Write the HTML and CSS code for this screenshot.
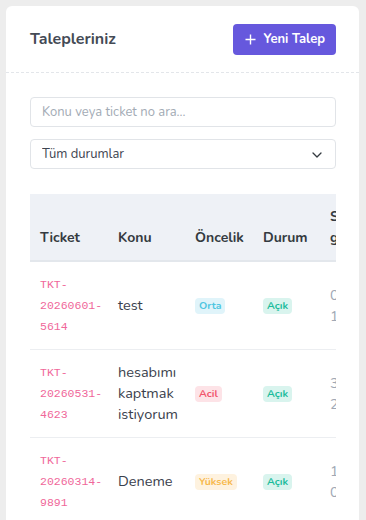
FILE: index.html
```html
<!DOCTYPE html>
<html lang="tr">
<head>
  <meta charset="UTF-8" />
  <title>Talepleriniz</title>
  <meta name="viewport" content="width=device-width, initial-scale=1.0">
  <link rel="stylesheet" href="styles.css">
</head>
<body>

<div class="card">
  <div class="card-header">
    <h4 class="card-title">Talepleriniz</h4>
    <button class="btn-primary">
      <svg width="11" height="11" viewBox="0 0 11 11"><path d="M5.5 0.5v10M0.5 5.5h10" stroke="#fff" stroke-width="1.4" fill="none"/></svg>
      Yeni Talep
    </button>
  </div>

  <div class="card-body">
    <input type="text" class="form-control" placeholder="Konu veya ticket no ara...">

    <div class="select-wrap">
      <select class="form-control form-select">
        <option>Tüm durumlar</option>
        <option>Açık</option>
        <option>Kapalı</option>
      </select>
      <svg class="select-arrow" width="10" height="6" viewBox="0 0 10 6"><path d="M1 1l4 4 4-4" stroke="#343a40" stroke-width="1.3" fill="none" stroke-linecap="round" stroke-linejoin="round"/></svg>
    </div>

    <div class="table-responsive">
      <table class="ticket-table">
        <thead>
          <tr>
            <th class="col-ticket">Ticket</th>
            <th class="col-subject">Konu</th>
            <th class="col-priority">Öncelik</th>
            <th class="col-status">Durum</th>
            <th class="col-date">Son<br>güncelleme</th>
          </tr>
        </thead>
        <tbody>
          <tr>
            <td><code>TKT-<br>20260601-<br>5614</code></td>
            <td>test</td>
            <td><span class="badge badge-info">Orta</span></td>
            <td><span class="badge badge-success">Açık</span></td>
            <td class="muted">01.06.2026<br>14:22</td>
          </tr>
          <tr>
            <td><code>TKT-<br>20260531-<br>4623</code></td>
            <td>hesabımı<br>kaptmak<br>istiyorum</td>
            <td><span class="badge badge-danger">Acil</span></td>
            <td><span class="badge badge-success">Açık</span></td>
            <td class="muted">31.05.2026<br>20:41</td>
          </tr>
          <tr>
            <td><code>TKT-<br>20260314-<br>9891</code></td>
            <td>Deneme</td>
            <td><span class="badge badge-warning">Yüksek</span></td>
            <td><span class="badge badge-success">Açık</span></td>
            <td class="muted">14.03.2026<br>09:05</td>
          </tr>
        </tbody>
      </table>
    </div>
  </div>
</div>

</body>
</html>
```

FILE: styles.css
```css
body {
  margin: 0;
  padding: 6px 7px 0 6px;
  background-color: #ededed;
  font-family: Nunito, Lato, "Open Sans", sans-serif;
  font-size: 14px;
  line-height: 1.5;
  color: #3a404c;
  height: 520px;
  overflow: hidden;
  box-sizing: border-box;
}
.card {
  background: #fff;
  border-radius: 6px;
  min-height: 600px;
}
.card-header {
  display: flex;
  justify-content: space-between;
  align-items: center;
  height: 66px;
  padding: 0 23px 0 24px;
  border-bottom: 1px dashed #e3e6ea;
}
.card-title {
  margin: 0;
  font-size: 16px;
  font-weight: 700;
  color: #444a55;
}
.btn-primary {
  display: flex;
  align-items: center;
  gap: 7px;
  height: 31px;
  padding: 0 11px 0 12px;
  background-color: #6658dd;
  color: #fff;
  border: none;
  border-radius: 4px;
  font-family: inherit;
  font-size: 13px;
  font-weight: 700;
}
.card-body {
  padding: 24px 23px 0 24px;
}
.form-control {
  display: block;
  width: 100%;
  box-sizing: border-box;
  height: 30px;
  padding: 0 11px;
  border: 1px solid #e1e4e8;
  border-radius: 4px;
  font-family: inherit;
  font-size: 13px;
  color: #3e4450;
  background: #fff;
}
.form-control::placeholder {
  color: #a3abb5;
}
.select-wrap {
  position: relative;
  margin-top: 12px;
}
.form-select {
  appearance: none;
  -webkit-appearance: none;
}
.select-arrow {
  position: absolute;
  right: 14px;
  top: 13px;
  pointer-events: none;
}
.table-responsive {
  margin-top: 25px;
  overflow: hidden;
}
.ticket-table {
  table-layout: fixed;
  width: 410px;
  border-collapse: collapse;
}
.ticket-table th,
.ticket-table td {
  box-sizing: border-box;
  padding: 12px 10px;
  text-align: left;
  line-height: 21px;
}
.col-ticket { width: 78px; }
.col-subject { width: 77px; }
.col-priority { width: 68px; }
.col-status { width: 67px; }
.col-date { width: 120px; }
.ticket-table thead th {
  background-color: #eef1f6;
  color: #343a40;
  font-weight: 700;
  vertical-align: bottom;
  border-bottom: 2px solid #e3e7ec;
}
.ticket-table td {
  vertical-align: middle;
  border-bottom: 1px solid #eceef1;
  font-size: 14.5px;
}
code {
  display: block;
  font-family: "Liberation Mono", "DejaVu Sans Mono", monospace;
  font-size: 11.5px;
  line-height: 21px;
  color: #f0679a;
}
.muted {
  color: #a0a8b5;
}
.badge {
  display: inline-block;
  padding: 0 4px;
  border-radius: 4px;
  font-size: 10.5px;
  font-weight: 700;
  line-height: 16px;
  vertical-align: middle;
}
.badge-info {
  background-color: #e0f4fa;
  color: #4fc6e1;
}
.badge-success {
  background-color: #d9f4ee;
  color: #1abc9c;
}
.badge-danger {
  background-color: #fde3e7;
  color: #f1556c;
}
.badge-warning {
  background-color: #fef2df;
  color: #f7b84b;
}
```
